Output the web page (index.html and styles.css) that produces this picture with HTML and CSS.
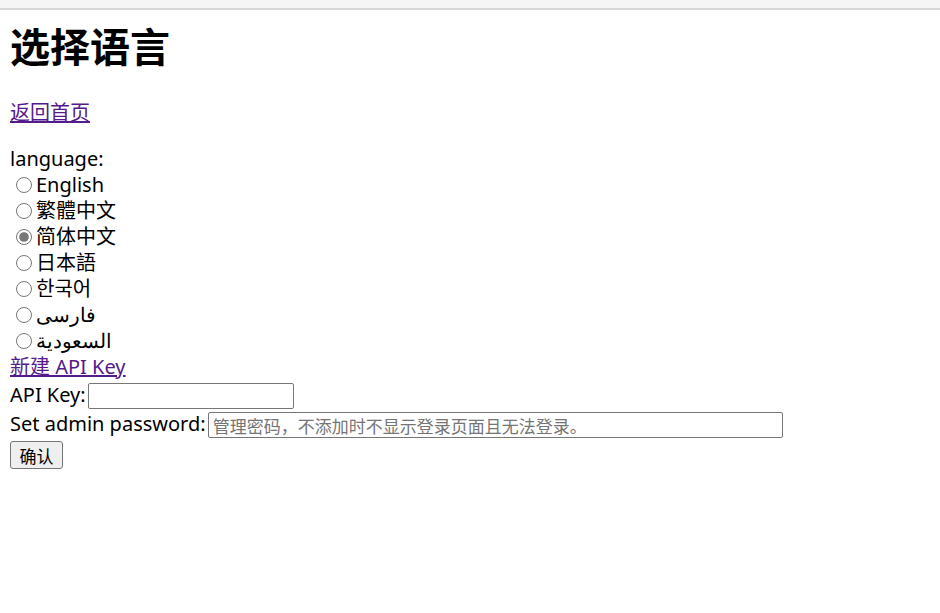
FILE: index.html
```html
<!DOCTYPE html>
<html>
<head>
  <meta charset="utf-8">
  <title>选择语言</title>
  <link rel="stylesheet" href="styles.css">
</head>
<body>
  <div class="topbar"></div>
  <div class="page">
    <h1>选择语言</h1>
    <p><a href="#">返回首页</a></p>
    <form class="lang-form">
      <div class="label">language:</div>
      <label class="opt"><input type="radio" name="lang" value="en"> English</label>
      <label class="opt"><input type="radio" name="lang" value="zh-tw"> 繁體中文</label>
      <label class="opt"><input type="radio" name="lang" value="zh-cn" checked> 简体中文</label>
      <label class="opt"><input type="radio" name="lang" value="ja"> 日本語</label>
      <label class="opt"><input type="radio" name="lang" value="ko"> 한국어</label>
      <label class="opt"><input type="radio" name="lang" value="fa"> <span dir="rtl">فارسی</span></label>
      <label class="opt"><input type="radio" name="lang" value="ar"> <span dir="rtl">السعودية</span></label>
      <a href="#" class="row">新建 API Key</a>
      <div class="row">API Key:<input type="text" class="key-input"></div>
      <div class="row">Set admin password:<input type="password" class="pass-input" placeholder="管理密码，不添加时不显示登录页面且无法登录。"></div>
      <button type="submit" class="submit-btn">确认</button>
    </form>
  </div>
</body>
</html>
```

FILE: styles.css
```css
body {
  margin: 0;
  font-family: "Noto Sans", "Noto Sans CJK SC", sans-serif;
  font-size: 20px;
  line-height: 26px;
  color: #000;
  background: #fff;
}
.topbar {
  height: 8px;
  background-color: #f5f5f5;
  border-bottom: 2px solid #d6d6d6;
}
.page {
  padding: 0 10px;
}
h1 {
  margin: 12px 0 0 0;
  font-size: 40px;
  line-height: 50px;
  font-weight: bold;
}
p {
  margin: 28px 0 20px 0;
}
a {
  color: #551a8b;
}
.lang-form {
  display: flex;
  flex-direction: column;
  align-items: flex-start;
}
.opt {
  display: flex;
  align-items: center;
}
.opt input {
  width: 16px;
  height: 16px;
  margin: 0 4px 0 6px;
  accent-color: #767676;
}
.row {
  display: flex;
  align-items: center;
}
.key-input {
  width: 206px;
  height: 26px;
  box-sizing: border-box;
  border: 1px solid #767676;
  border-radius: 2px;
  margin: 3px 0 0 2px;
  font-size: 16px;
}
.pass-input {
  width: 575px;
  height: 26px;
  box-sizing: border-box;
  border: 1px solid #767676;
  border-radius: 2px;
  margin: 3px 0 0 2px;
  padding: 0 4px;
  font-family: "Noto Sans CJK SC", sans-serif;
  font-size: 17px;
}
.pass-input::placeholder {
  color: #757575;
}
.submit-btn {
  margin-top: 3px;
  width: 53px;
  height: 28px;
  padding: 0;
  font-family: "Noto Sans CJK SC", sans-serif;
  font-size: 17px;
  background-color: #efefef;
  border: 1px solid #767676;
  border-radius: 3px;
}
```
